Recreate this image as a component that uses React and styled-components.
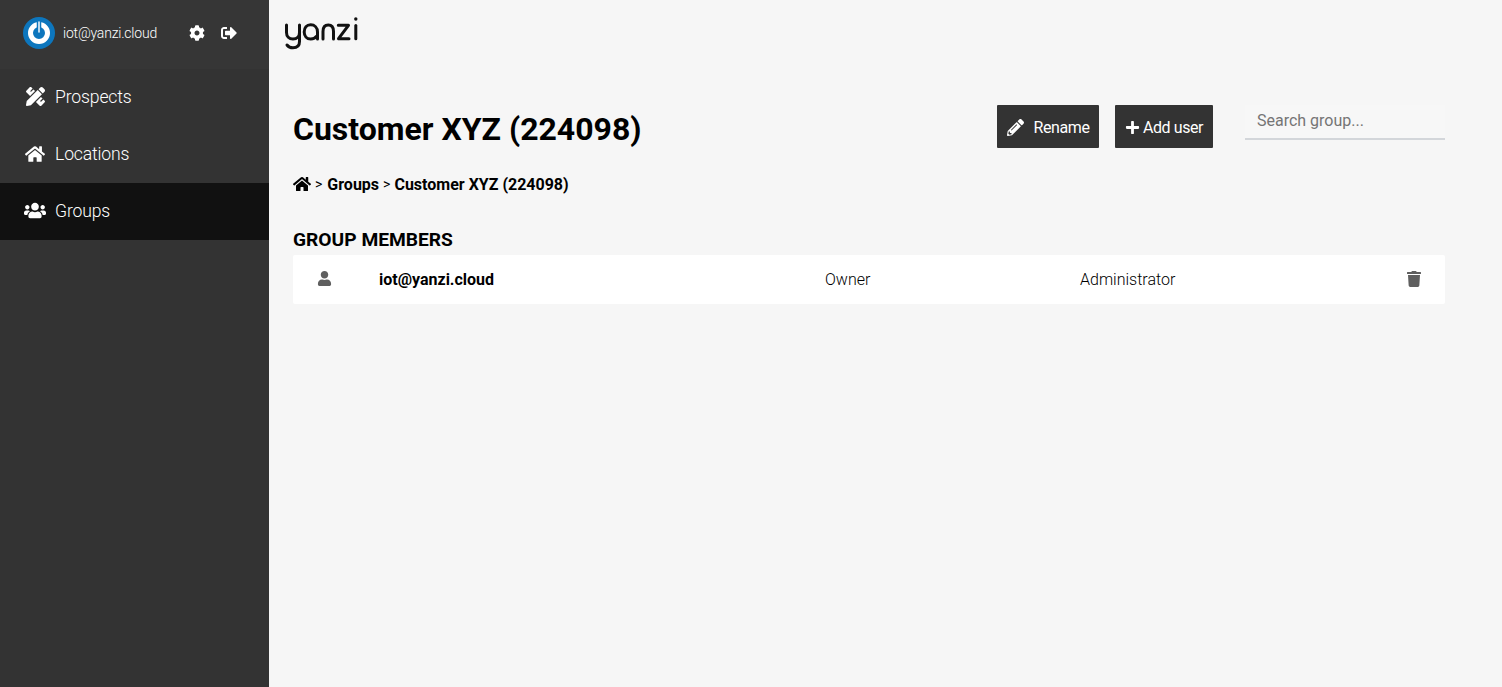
import React from "react";
import styled, { createGlobalStyle } from "styled-components";
import { FaCog, FaSignOutAlt, FaPencilRuler, FaHome, FaUsers, FaPencilAlt, FaPlus, FaUser, FaTrash } from "react-icons/fa";

const Global = createGlobalStyle`
  html, body { margin: 0; padding: 0; height: 100%; background: #f6f6f6; }
  body { font-family: Roboto, "Liberation Sans", sans-serif; color: #000; }
  #root { height: 100%; }
  * { box-sizing: border-box; }
`;

const Page = styled.div`
  display: flex;
  height: 687px;
  overflow: hidden;
`;

const Sidebar = styled.aside`
  width: 269px;
  flex: none;
  background: #333;
  color: #fff;
`;

const UserBar = styled.div`
  height: 69px;
  display: flex;
  align-items: center;
  padding: 0 0 3px 23px;
  background: #363636;
`;

const Avatar = styled.svg`
  width: 32px;
  height: 32px;
  flex: none;
`;

const UserName = styled.span`
  margin-left: 8px;
  width: 126px;
  font-size: 14px;
  font-weight: 300;
  letter-spacing: -0.2px;
  white-space: nowrap;
`;

const BarIcon = styled.span`
  width: 32px;
  display: flex;
  justify-content: flex-start;
  font-size: 16px;
`;

const NavItem = styled.div`
  height: 57px;
  display: flex;
  align-items: center;
  padding: 0 0 2px 24px;
  font-size: 17.6px;
  font-weight: 300;
  letter-spacing: -0.15px;
  background: ${(p) => (p.$active ? "#111" : "transparent")};
`;

const NavIcon = styled.span`
  width: 22px;
  margin-right: 9px;
  display: flex;
  justify-content: center;
  font-size: ${(p) => p.$size}px;
`;

const Main = styled.main`
  flex: 1;
  padding: 0 57px 0 24px;
`;

const LogoRow = styled.div`
  height: 105px;
  padding-top: 17px;
  margin-left: -9px;
`;

const Logo = styled.svg`
  display: block;
  width: 74px;
  height: 33px;
`;

const TitleRow = styled.div`
  display: flex;
  align-items: flex-start;
  height: 43px;
`;

const Title = styled.h1`
  margin: 0;
  flex: 1;
  font-size: 32px;
  line-height: 48px;
  font-weight: 700;
  white-space: nowrap;
`;

const ActionButton = styled.button`
  height: 43px;
  width: ${(p) => p.$w}px;
  margin-right: 16px;
  padding: 1px 0 0;
  border: 0;
  border-radius: 1px;
  background: #333;
  color: #fff;
  font-family: inherit;
  font-size: 16px;
  font-weight: 400;
  letter-spacing: -0.4px;
  display: flex;
  align-items: center;
  justify-content: center;
  gap: ${(p) => p.$gap}px;
`;

const SearchBox = styled.input`
  width: 200px;
  height: 35px;
  margin-left: 16px;
  padding: 0 12px 2px;
  border: 0;
  border-bottom: 2px solid #d3d6da;
  background: #f7f7f7;
  font-family: inherit;
  font-size: 16px;
  outline: none;
  &::placeholder { color: #757575; opacity: 1; }
`;

const Crumbs = styled.div`
  margin-top: 24px;
  height: 24px;
  display: flex;
  align-items: center;
  gap: 4px;
  font-size: 16px;
  font-weight: 700;
  white-space: nowrap;
`;

const CrumbSep = styled.span`
  font-weight: 400;
  font-size: 14px;
  margin-right: ${(p) => p.$extra || 0}px;
`;

const SectionTitle = styled.h2`
  margin: 31px 0 0;
  font-size: 19.2px;
  line-height: 25px;
  font-weight: 700;
`;

const MemberRow = styled.div`
  margin-top: 3px;
  height: 49px;
  display: grid;
  grid-template-columns: 86px 446px 255px 1fr 39px;
  align-items: center;
  background: #fff;
  border-radius: 2px;
  font-size: 16px;
  font-weight: 300;
`;

const RowIcon = styled.span`
  display: flex;
  padding: 0 0 2px ${(p) => p.$pad}px;
  color: #5f5f5f;
  font-size: ${(p) => p.$size}px;
`;

const MemberName = styled.span`
  font-weight: 700;
`;

export default function App() {
  return (
    <Page>
      <Global />
      <Sidebar>
        <UserBar>
          <Avatar viewBox="0 0 32 32">
            <circle cx="16" cy="16" r="16" fill="#0d76bd" />
            <circle cx="16" cy="16" r="8.5" fill="none" stroke="#fff" strokeWidth="5" />
            <path d="M16 2V17" stroke="#0d76bd" strokeWidth="4.5" />
            <path d="M16 5V15" stroke="#e8f2f9" strokeWidth="1.6" strokeLinecap="round" />
          </Avatar>
          <UserName>iot@yanzi.cloud</UserName>
          <BarIcon><FaCog /></BarIcon>
          <BarIcon><FaSignOutAlt /></BarIcon>
        </UserBar>
        <NavItem><NavIcon $size={19}><FaPencilRuler /></NavIcon>Prospects</NavItem>
        <NavItem><NavIcon $size={20}><FaHome /></NavIcon>Locations</NavItem>
        <NavItem $active><NavIcon $size={23}><FaUsers /></NavIcon>Groups</NavItem>
      </Sidebar>
      <Main>
        <LogoRow>
          <Logo viewBox="0 0 74 33" fill="none" stroke="#111" strokeWidth="3" strokeLinecap="round" strokeLinejoin="round">
            <path d="M2.5 8V15.5C2.5 19.5 5 22 9 22C13 22 15.5 19.5 15.5 15.5V8V24.5C15.5 28.5 13 30.8 9 30.8C6.5 30.8 4.3 29.8 3 28" />
            <path d="M33.5 22V15C33.5 10.5 30.5 7.8 26.7 7.8C22.7 7.8 20.2 10.8 20.2 15C20.2 19 22.7 22 26.7 22C29 22 31.5 21 33.5 18.5" />
            <path d="M39 22V14.5C39 10.5 41 8 44.3 8C47.5 8 49.5 10.5 49.5 14.5V22" />
            <path d="M54.3 8.3H64.5L54.5 21.7H65" />
            <path d="M71.8 8.5V21.7" />
            <circle cx="71.8" cy="2" r="1.7" fill="#111" stroke="none" />
          </Logo>
        </LogoRow>
        <TitleRow>
          <Title>Customer XYZ (224098)</Title>
          <ActionButton $w={102} $gap={10}><FaPencilAlt size={17} />Rename</ActionButton>
          <ActionButton $w={98} $gap={3}><FaPlus size={15} />Add user</ActionButton>
          <SearchBox placeholder="Search group..." />
        </TitleRow>
        <Crumbs>
          <FaHome size={18} />
          <CrumbSep $extra={1}>&gt;</CrumbSep>
          <span>Groups</span>
          <CrumbSep>&gt;</CrumbSep>
          <span>Customer XYZ (224098)</span>
        </Crumbs>
        <SectionTitle>GROUP MEMBERS</SectionTitle>
        <MemberRow>
          <RowIcon $pad={24} $size={15}><FaUser /></RowIcon>
          <MemberName>iot@yanzi.cloud</MemberName>
          <span>Owner</span>
          <span>Administrator</span>
          <RowIcon $pad={0} $size={16}><FaTrash /></RowIcon>
        </MemberRow>
      </Main>
    </Page>
  );
}
